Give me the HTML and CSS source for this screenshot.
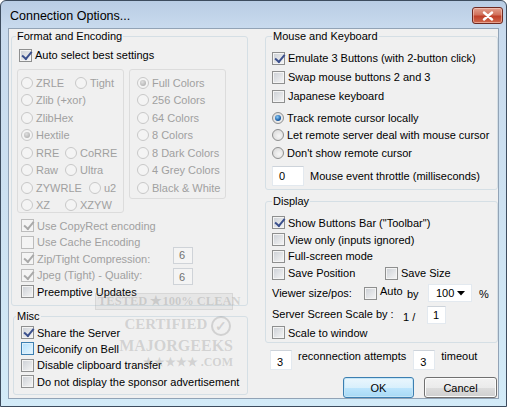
FILE: index.html
```html
<html lang="en">

<head>
    <meta charset="UTF-8">
    <title>Connection Options...</title>
    <link rel="stylesheet" href="styles.css">
</head>

<body>
    <div class="window">
        <div class="titlebar">
            <span class="title">Connection Options...</span>
            <button class="close">
                <svg width="12" height="10" viewBox="0 0 12 10"><path d="M2 1.5 L10 8.5 M10 1.5 L2 8.5" stroke="#fff" stroke-width="2.4" stroke-linecap="round"/></svg>
            </button>
        </div>
        <div class="client">
            <div class="col col-left">
                <fieldset class="group fmt">
                    <legend>Format and Encoding</legend>
                    <div class="row auto-row"><span class="cb on"></span>Auto select best settings</div>
                    <div class="inner-wrap">
                        <div class="inner enc">
                            <div class="rrow"><span class="opt w54"><span class="rb off"></span>ZRLE</span><span class="opt"><span class="rb off"></span>Tight</span></div>
                            <div class="rrow"><span class="opt"><span class="rb off"></span>Zlib (+xor)</span></div>
                            <div class="rrow"><span class="opt"><span class="rb off"></span>ZlibHex</span></div>
                            <div class="rrow"><span class="opt"><span class="rb off sel"></span>Hextile</span></div>
                            <div class="rrow"><span class="opt w44"><span class="rb off"></span>RRE</span><span class="opt"><span class="rb off"></span>CoRRE</span></div>
                            <div class="rrow"><span class="opt w44"><span class="rb off"></span>Raw</span><span class="opt"><span class="rb off"></span>Ultra</span></div>
                            <div class="rrow"><span class="opt w68"><span class="rb off"></span>ZYWRLE</span><span class="opt"><span class="rb off"></span>u2</span></div>
                            <div class="rrow"><span class="opt w44"><span class="rb off"></span>XZ</span><span class="opt"><span class="rb off"></span>XZYW</span></div>
                        </div>
                        <div class="inner colors">
                            <div class="rrow"><span class="opt"><span class="rb off sel"></span>Full Colors</span></div>
                            <div class="rrow"><span class="opt"><span class="rb off"></span>256 Colors</span></div>
                            <div class="rrow"><span class="opt"><span class="rb off"></span>64 Colors</span></div>
                            <div class="rrow"><span class="opt"><span class="rb off"></span>8 Colors</span></div>
                            <div class="rrow"><span class="opt"><span class="rb off"></span>8 Dark Colors</span></div>
                            <div class="rrow"><span class="opt"><span class="rb off"></span>4 Grey Colors</span></div>
                            <div class="rrow"><span class="opt"><span class="rb off"></span>Black &amp; White</span></div>
                        </div>
                    </div>
                    <div class="opts">
                        <div class="crow dim"><span class="cb off on"></span>Use CopyRect encoding</div>
                        <div class="crow dim"><span class="cb off"></span>Use Cache Encoding</div>
                        <div class="crow dim"><span class="label-fix"><span class="cb off on"></span>Zip/Tight Compression:</span><span class="edit disabled up">6</span></div>
                        <div class="crow dim"><span class="label-fix"><span class="cb off on"></span>Jpeg (Tight) - Quality:</span><span class="edit disabled down">6</span></div>
                        <div class="crow"><span class="cb"></span>Preemptive Updates</div>
                    </div>
                </fieldset>
                <fieldset class="group misc">
                    <legend>Misc</legend>
                    <div class="crow first"><span class="cb on"></span>Share the Server</div>
                    <div class="crow"><span class="cb hot"></span>Deiconify on Bell</div>
                    <div class="crow"><span class="cb"></span>Disable clipboard transfer</div>
                    <div class="crow"><span class="cb"></span>Do not display the sponsor advertisement</div>
                </fieldset>
            </div>

            <div class="col col-right">
                <fieldset class="group mouse">
                    <legend>Mouse and Keyboard</legend>
                    <div class="mrow first"><span class="cb on"></span>Emulate 3 Buttons (with 2-button click)</div>
                    <div class="mrow"><span class="cb"></span>Swap mouse buttons 2 and 3</div>
                    <div class="mrow"><span class="cb"></span>Japanese keyboard</div>
                    <div class="rrow cursor first"><span class="rb sel"></span>Track remote cursor locally</div>
                    <div class="rrow cursor"><span class="rb"></span>Let remote server deal with mouse cursor</div>
                    <div class="rrow cursor"><span class="rb"></span>Don't show remote cursor</div>
                    <div class="throttle"><span class="edit wide">0</span>Mouse event throttle (milliseconds)</div>
                </fieldset>
                <fieldset class="group display">
                    <legend>Display</legend>
                    <div class="drow first"><span class="cb on"></span>Show Buttons Bar ("Toolbar")</div>
                    <div class="drow"><span class="cb"></span>View only (inputs ignored)</div>
                    <div class="drow"><span class="cb"></span>Full-screen mode</div>
                    <div class="drow"><span class="pos"><span class="cb"></span>Save Position</span><span class="cb"></span>Save Size</div>
                    <div class="viewer">
                        <span class="v-label">Viewer size/pos:</span>
                        <span class="v-auto"><span class="cb"></span><span class="raise">Auto</span></span>
                        <span class="v-by">by</span>
                        <span class="combo">100<svg width="8" height="5" viewBox="0 0 8 5"><path d="M0 0 H8 L4 4.5 Z" fill="#000"/></svg></span>
                        <span class="v-pct">%</span>
                    </div>
                    <div class="scale">
                        <span class="s-label">Server Screen Scale by :</span>
                        <span class="s-frac">1 /</span>
                        <span class="edit small">1</span>
                    </div>
                    <div class="drow last"><span class="cb"></span>Scale to window</div>
                </fieldset>
                <div class="reconnect">
                    <span class="edit num">3</span>
                    <span class="r-text">reconnection attempts</span>
                    <span class="edit num">3</span>
                    <span class="r-text">timeout</span>
                </div>
                <div class="buttons">
                    <button class="btn default">OK</button>
                    <button class="btn">Cancel</button>
                </div>
            </div>

            <div class="stamp">
                <div class="stamp-top">TESTED ★100% CLEAN</div>
                <div class="stamp-line">CERTIFIED <span class="tick">✓</span></div>
                <div class="stamp-line big">MAJORGEEKS</div>
                <div class="stamp-line small">★★★★★ .COM</div>
            </div>
        </div>
    </div>
</body>

</html>
```

FILE: styles.css
```css
* {
    box-sizing: border-box;
}

body {
    margin: 0;
    font-family: "Liberation Sans", Arial, sans-serif;
    font-size: 11px;
    color: #000;
}

/* window frame */
.window {
    width: 507px;
    height: 407px;
    display: flex;
    flex-direction: column;
    padding: 0 7px 7px 7px;
    border: 1px solid #3d4c5e;
    border-radius: 6px 6px 0 0;
    background: linear-gradient(#b9cde4, #c9dbee 28px, #cde1f1 200px, #d3ebf8);
}

.titlebar {
    height: 27px;
    display: flex;
    align-items: center;
    justify-content: space-between;
    padding-left: 2px;
}

.title {
    font-size: 12.5px;
    margin-top: 2px;
}

.close {
    width: 31px;
    height: 17px;
    margin-top: 2px;
    margin-right: -4px;
    padding: 0;
    display: flex;
    align-items: center;
    justify-content: center;
    border: 1px solid #6e2a22;
    border-radius: 3px;
    background: linear-gradient(#e3a08f, #d1715b 45%, #c0402a 55%, #cf6a4e);
    box-shadow: inset 0 0 0 1px rgba(255, 220, 210, 0.5);
}

.client {
    flex: 1;
    position: relative;
    display: flex;
    gap: 17px;
    padding: 0 0 0 2px;
    background: #f0f0f0;
    border: 1px solid #92a3b6;
}

.col {
    display: flex;
    flex-direction: column;
}

.col-left {
    width: 237px;
}

.col-right {
    width: 233px;
}

/* group boxes */
.group {
    margin: 0;
    padding: 0;
    border: 1px solid #d5dfe5;
    border-radius: 3px;
    min-width: 0;
}

.group legend {
    padding: 0 1px;
    line-height: 14px;
}

.fmt {
    height: 277px;
    padding-left: 7px;
}

.fmt legend {
    margin-left: -3px;
}

.misc {
    height: 86px;
    margin: 3px 0 0 2px;
    padding-left: 7px;
}

.misc legend {
    margin-left: -5px;
}

.mouse {
    height: 161px;
    padding-left: 6px;
}

.display {
    height: 149px;
    margin-top: 4px;
    padding-left: 6px;
}

/* rows */
.row,
.crow,
.mrow,
.drow,
.rrow {
    display: flex;
    align-items: center;
    white-space: nowrap;
}

.row {
    height: 17px;
    margin-top: 3.5px;
}

.crow {
    height: 16.5px;
}

.mrow {
    height: 19px;
}

.drow {
    height: 16.7px;
}

.rrow {
    height: 17.5px;
}

.opt {
    display: flex;
    align-items: center;
}

.w44 { width: 44px; }
.w54 { width: 54px; }
.w68 { width: 68px; }

.inner-wrap {
    display: flex;
    align-items: flex-start;
    gap: 5px;
    margin: 5.5px 0 0 -2px;
}

.inner {
    border: 1px solid #dcdcdc;
    border-radius: 3px;
    padding-top: 4px;
    color: #a0a0a0;
}

.enc {
    width: 107px;
    height: 144px;
    padding-left: 3px;
}

.colors {
    width: 97px;
    height: 130px;
    padding-left: 7px;
}

.opts {
    margin: 4.5px 0 0 2px;
}

.dim {
    color: #a0a0a0;
}

.label-fix {
    display: flex;
    align-items: center;
    width: 152px;
}

.misc .crow {
    height: 16.3px;
}

.misc .crow.first {
    margin-top: 1.5px;
}

.mrow.first {
    margin-top: 5.5px;
}

.rrow.cursor.first {
    margin-top: 3.7px;
}

.throttle {
    display: flex;
    align-items: center;
    gap: 6px;
    height: 20px;
    margin-top: 4px;
    white-space: nowrap;
}

.drow.first {
    margin-top: 6.6px;
}

.pos {
    display: flex;
    align-items: center;
    width: 113px;
}

.viewer {
    display: flex;
    align-items: center;
    height: 20px;
    margin-top: 2px;
    white-space: nowrap;
}

.v-label { width: 92px; }

.v-auto {
    display: flex;
    align-items: center;
    width: 43px;
}

.raise {
    margin-top: -5px;
}

.v-by {
    width: 21px;
    margin-top: 2px;
}

.v-pct {
    margin-left: 7px;
    margin-top: 2px;
}

.combo {
    width: 44px;
    height: 18px;
    display: flex;
    align-items: center;
    justify-content: space-between;
    padding: 0 6px 0 7px;
    background: #fff;
    border: 1px solid #e3e9ef;
}

.scale {
    display: flex;
    align-items: center;
    height: 19px;
    margin-top: 2px;
    white-space: nowrap;
}

.s-label {
    width: 131px;
    margin-top: -2px;
}

.s-frac {
    width: 24px;
    margin-top: 4px;
}

.drow.last {
    margin-top: 0;
}

/* edit boxes */
.edit {
    display: flex;
    align-items: center;
    height: 18px;
    padding-left: 5px;
    background: #fff;
    border: 1px solid #e3e9ef;
    border-top-color: #cdd3da;
}

.edit.disabled {
    width: 20px;
    height: 17px;
    color: #707070;
    background: #f4f4f4;
    border-color: #cfd3d8;
}

.edit.up {
    align-self: flex-start;
    margin-top: -4px;
}

.edit.down {
    align-self: flex-start;
    margin-top: 1px;
}

.edit.wide {
    width: 32px;
    height: 20px;
    padding-left: 6px;
}

.edit.small {
    width: 19px;
}

.edit.num {
    width: 22px;
    height: 20px;
    padding-left: 6px;
    padding-top: 3px;
}

.reconnect {
    display: flex;
    align-items: flex-start;
    height: 20px;
    margin-top: 7px;
    margin-left: 5px;
    white-space: nowrap;
}

.r-text {
    margin: 0 7px 0 6px;
    line-height: 13px;
}

.buttons {
    display: flex;
    justify-content: flex-end;
    gap: 10px;
    margin-top: 7px;
    margin-right: 1px;
}

.btn {
    width: 73px;
    height: 21px;
    padding: 0;
    font: inherit;
    border: 1px solid #707070;
    border-radius: 3px;
    background: linear-gradient(#f2f2f2, #ebebeb 50%, #dddddd 50%, #cfcfcf);
    box-shadow: inset 0 0 0 1px #fcfcfc;
}

.btn.default {
    width: 71px;
    border-color: #3c7fb1;
    background: linear-gradient(#eaf6fd, #d9f0fc 50%, #bee6fd 50%, #a7d9f5);
    box-shadow: inset 0 0 0 1px #c5e5f6;
}

/* check boxes */
.cb {
    position: relative;
    flex: none;
    width: 13px;
    height: 13px;
    margin-right: 3px;
    border: 1px solid #8e8f8f;
    background: linear-gradient(135deg, #cbcfd5, #f6f6f6);
    box-shadow: inset 0 0 0 1px #f4f4f4;
}

.cb.on::after {
    content: "";
    position: absolute;
    left: 3px;
    top: 0;
    width: 4px;
    height: 8px;
    border: solid #3b508d;
    border-width: 0 2px 2px 0;
    transform: rotate(40deg);
    transform-origin: 70% 60%;
}

.cb.off {
    border-color: #bcbcbc;
    background: #f4f4f4;
}

.cb.off.on::after {
    border-color: #a9a9a9;
}

.cb.hot {
    border-color: #3c7fb1;
    background: linear-gradient(135deg, #b1dffd, #e9f7fe);
    box-shadow: inset 0 0 0 1px #def0fb;
}

/* radio buttons */
.rb {
    position: relative;
    flex: none;
    width: 12px;
    height: 12px;
    margin-right: 3px;
    border-radius: 50%;
    border: 1px solid #8e8f8f;
    background: radial-gradient(circle at 60% 60%, #f6f6f6, #d4d4d4);
}

.rb.off {
    border-color: #c8c8c8;
    background: #f4f4f4;
}

.rb.sel::after {
    content: "";
    position: absolute;
    left: 2px;
    top: 2px;
    width: 6px;
    height: 6px;
    border-radius: 50%;
    background: radial-gradient(circle at 40% 35%, #8fd0fb, #1b5fa8 60%, #16407a);
}

.rb.off.sel::after {
    background: radial-gradient(circle at 40% 35%, #e0e0e0, #a5a5a5);
}

/* download site stamp */
.stamp {
    position: absolute;
    left: 86px;
    top: 264px;
    width: 138px;
    font-family: "Liberation Serif", serif;
    font-weight: bold;
    color: rgba(120, 120, 120, 0.26);
    text-align: right;
    line-height: 1;
    white-space: nowrap;
    pointer-events: none;
}

.stamp-top {
    font-size: 12.5px;
    padding: 1px 2px;
    text-align: center;
    background: rgba(150, 150, 150, 0.1);
    border: 1px solid rgba(150, 150, 150, 0.18);
}

.stamp-line {
    font-size: 15px;
    margin-top: 6px;
    padding-right: 2px;
}

.stamp-line.big {
    font-size: 16px;
    margin-top: 2px;
    padding-right: 0;
}

.stamp-line.small {
    font-size: 12px;
    margin-top: 2px;
    padding-right: 0;
}

.tick {
    display: inline-block;
    width: 20px;
    height: 20px;
    border-radius: 50%;
    border: 2px solid rgba(120, 120, 120, 0.26);
    font-size: 14px;
    text-align: center;
    line-height: 17px;
    vertical-align: middle;
}
```
